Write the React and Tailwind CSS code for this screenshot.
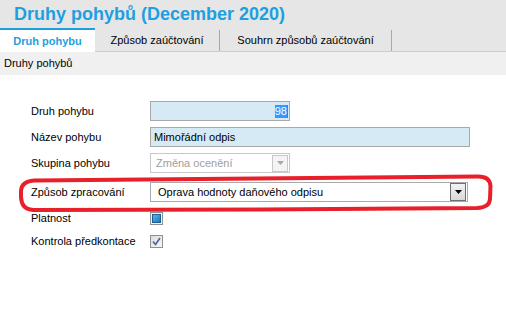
import React from 'react'

const font = { fontFamily: '"Liberation Sans", Arial, sans-serif' }

const Tab = ({ label, active }) => (
  <div
    className={
      active
        ? 'flex h-[24px] w-[95px] items-center justify-center border-t-2 border-[#1e9fe0] bg-white text-[11px] font-bold text-[#1e9fe0]'
        : 'flex h-[23px] items-center justify-center border-r border-[#a8a8a8] text-[11px] text-black'
    }
  >
    {label}
  </div>
)

const Row = ({ label, className, children }) => (
  <div className={`flex items-center ${className}`}>
    <div className="w-[119px] text-[11px] text-black">{label}</div>
    {children}
  </div>
)

const Arrow = ({ color }) => (
  <svg width="7" height="4" viewBox="0 0 7 4">
    <path d="M0 0 H7 L3.5 4 Z" fill={color} />
  </svg>
)

const RedMark = () => (
  <svg className="pointer-events-none absolute left-0 top-0" width="506" height="322">
    <path
      d="M34 180.5 L478 176.5 Q490 176.5 490.5 186 L490 199 Q489.5 207.5 477 208 L262 209.5 L33 210 Q21.5 209.5 21 197 L21 191 Q21.5 181.5 34 180.5 Z"
      fill="none"
      stroke="#e8202a"
      strokeWidth="4"
      strokeLinejoin="round"
    />
  </svg>
)

export default function App() {
  return (
    <div className="relative h-[322px] w-[506px] overflow-hidden bg-white" style={font}>
      <div className="flex h-[28px] items-center bg-[#e6e6e6] pl-[14px] text-[18px] font-bold text-[#1e9fe0]">
        Druhy pohybů (December 2020)
      </div>
      <div className="flex h-[24px] items-start border-b border-[#cccccc] bg-[#e6e6e6]">
        <Tab label="Druh pohybu" active />
        <div className="mt-[2px] flex h-[21px] w-[125px] items-center justify-center border-r border-[#a8a8a8] text-[11px] text-black">
          Způsob zaúčtování
        </div>
        <div className="mt-[2px] flex h-[21px] w-[172px] items-center justify-center border-r border-[#a8a8a8] text-[11px] text-black">
          Souhrn způsobů zaúčtování
        </div>
      </div>
      <div className="flex h-[23px] items-center bg-[#f0f0f0] pl-[4px] text-[11px] text-black">
        Druhy pohybů
      </div>

      <div className="flex flex-col pl-[31px] pt-[26px]">
        <Row label="Druh pohybu" className="h-[20px]">
          <div className="flex h-[20px] w-[140px] items-center justify-end border border-[#a9a9a9] bg-[#d6eaf5] pr-[1px]">
            <span className="bg-[#3399ff] text-[11px] leading-[13px] text-white">98</span>
            <span className="h-[13px] w-[1px] bg-[#c86400]" />
          </div>
        </Row>
        <Row label="Název pohybu" className="mt-[6px] h-[20px]">
          <div className="flex h-[20px] w-[320px] items-center border border-[#a9a9a9] bg-[#d6eaf5] pl-[3px] text-[11px] text-black">
            Mimořádní odpis
          </div>
        </Row>
        <Row label="Skupina pohybu" className="mt-[6px] h-[20px]">
          <div className="flex h-[20px] w-[140px] items-center justify-between border border-[#c8c8c8] bg-white pl-[5px] pr-[1px] text-[11px] text-[#a0a0a0]">
            Změna ocenění
            <div className="flex h-[17px] w-[16px] items-center justify-center border border-[#c8c8c8] bg-[#f4f4f4]">
              <Arrow color="#a8a8a8" />
            </div>
          </div>
        </Row>
        <Row label="Způsob zpracování" className="mt-[9px] h-[20px]">
          <div className="flex h-[20px] w-[318px] items-center justify-between border border-[#a9a9a9] bg-white pl-[7px] pr-[1px] text-[11px] text-black">
            Oprava hodnoty daňového odpisu
            <div className="flex h-[18px] w-[16px] items-center justify-center border border-[#707070] bg-gradient-to-b from-[#f2f2f2] to-[#d8d8d8]">
              <Arrow color="#000000" />
            </div>
          </div>
        </Row>
        <Row label="Platnost" className="mt-[10px] h-[13px]">
          <div className="flex h-[13px] w-[13px] items-center justify-center border border-[#8f8f8f] bg-[#f4f4f4]">
            <div className="h-[9px] w-[9px] border border-[#1c5f96] bg-gradient-to-br from-[#5ab4ea] to-[#1a79bf]" />
          </div>
        </Row>
        <Row label="Kontrola předkontace" className="mt-[10px] h-[13px]">
          <div className="flex h-[13px] w-[13px] items-center justify-center border border-[#8f8f8f] bg-gradient-to-br from-[#dcdcdc] to-[#f8f8f8]">
            <svg width="9" height="9" viewBox="0 0 9 9">
              <path d="M1 4.5 L3.5 7.5 L8 1" fill="none" stroke="#4b5fa6" strokeWidth="1.6" />
            </svg>
          </div>
        </Row>
      </div>

      <RedMark />
    </div>
  )
}
